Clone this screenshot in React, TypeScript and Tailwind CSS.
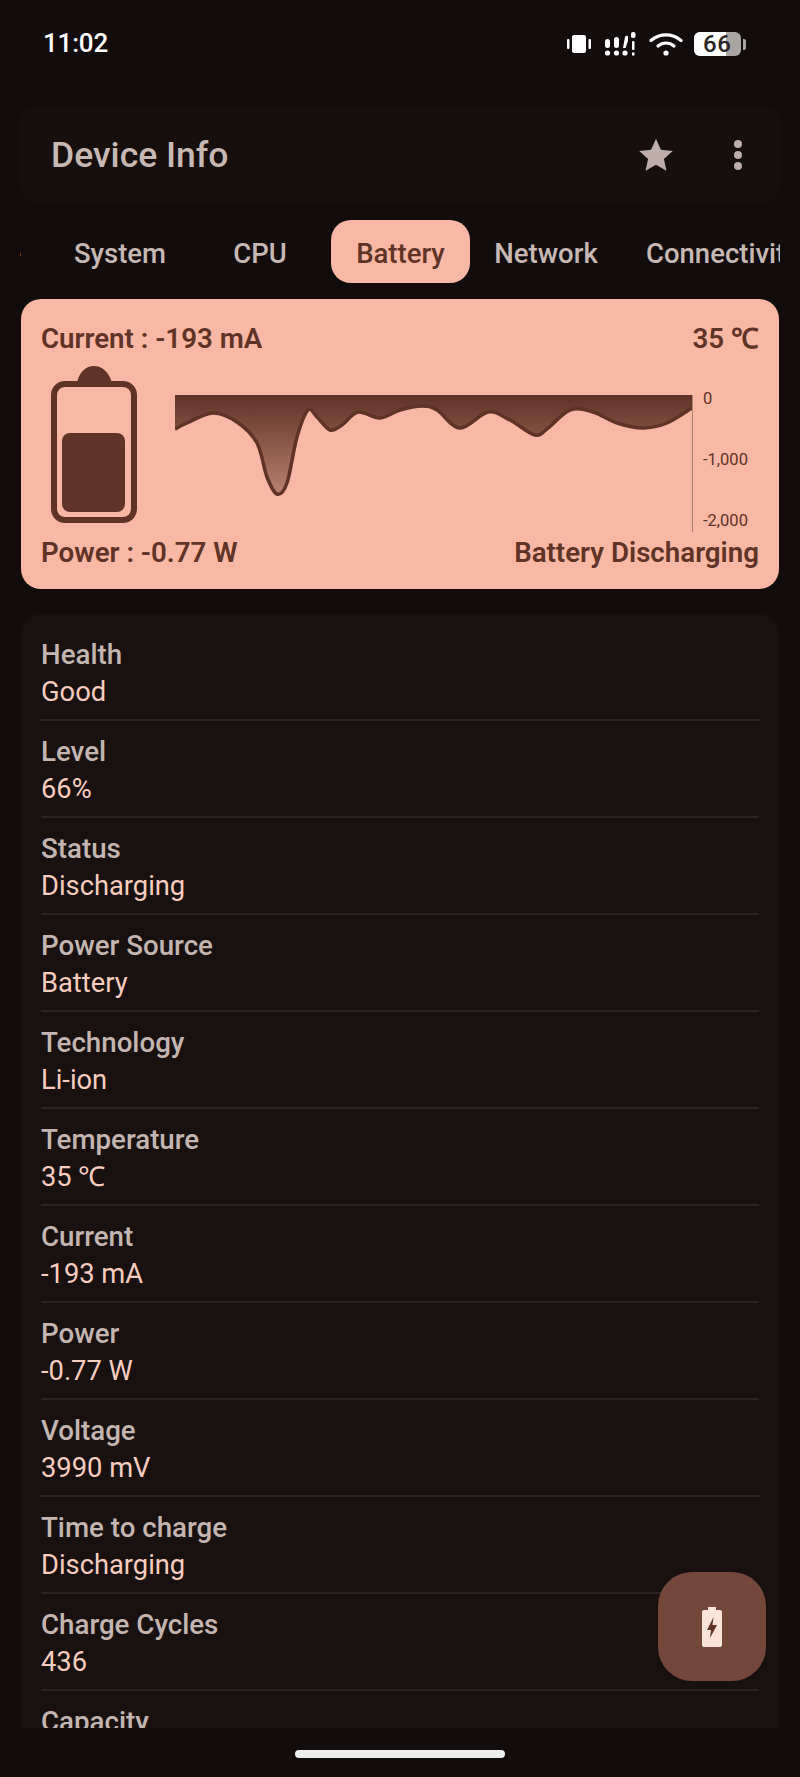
const TABS = [
  { label: 'System', width: 'w-[138px]' },
  { label: 'CPU', width: 'w-[142px]' },
  { label: 'Battery', width: 'w-[139px]', active: true },
  { label: 'Network', width: 'w-[152px]' },
  { label: 'Connectivity', width: 'w-[210px]' },
]

const ROWS = [
  ['Health', 'Good'],
  ['Level', '66%'],
  ['Status', 'Discharging'],
  ['Power Source', 'Battery'],
  ['Technology', 'Li-ion'],
  ['Temperature', '35 ℃'],
  ['Current', '-193 mA'],
  ['Power', '-0.77 W'],
  ['Voltage', '3990 mV'],
  ['Time to charge', 'Discharging'],
  ['Charge Cycles', '436'],
  ['Capacity', '4500 mAh'],
]

// samples read off the reference, relative to the top left of the chart
const CURVE: [number, number][] = [
  [0, 34], [12, 28], [38, 18], [62, 27], [82, 48], [92, 82], [102, 99], [112, 88], [122, 42],
  [133, 15], [142, 22], [155, 35], [167, 30], [183, 17], [205, 23], [225, 15], [247, 11],
  [262, 15], [285, 33], [313, 17], [335, 25], [360, 40], [373, 33], [395, 15], [418, 17],
  [442, 28], [468, 33], [492, 28], [517, 13],
]

function smoothPath(points: [number, number][]) {
  let d = `M${points[0][0]} ${points[0][1]}`
  for (let i = 0; i < points.length - 1; i++) {
    const p0 = points[Math.max(i - 1, 0)]
    const p1 = points[i]
    const p2 = points[i + 1]
    const p3 = points[Math.min(i + 2, points.length - 1)]
    const c1x = p1[0] + (p2[0] - p0[0]) / 6
    const c1y = p1[1] + (p2[1] - p0[1]) / 6
    const c2x = p2[0] - (p3[0] - p1[0]) / 6
    const c2y = p2[1] - (p3[1] - p1[1]) / 6
    d += ` C${c1x} ${c1y} ${c2x} ${c2y} ${p2[0]} ${p2[1]}`
  }
  return d
}

function StatusIcons() {
  return (
    <div className="mt-[4px] flex items-center">
      <svg width="24" height="20" viewBox="0 0 24 20" fill="#fff" className="mr-[12px]">
        <rect x="5" y="1" width="14" height="18" rx="2" />
        <rect x="0" y="5" width="2.5" height="10" rx="1" />
        <rect x="21.5" y="5" width="2.5" height="10" rx="1" />
      </svg>
      <svg width="34" height="26" viewBox="0 0 34 26" fill="#fff" className="mr-[12px]">
        <rect x="2" y="8" width="5" height="9" rx="2.5" />
        <circle cx="4.5" cy="22" r="2.6" />
        <rect x="11" y="6" width="5" height="11" rx="2.5" />
        <circle cx="13.5" cy="22" r="2.6" />
        <path d="M20 17 L22 6 Q23 4 25 5 L25 10 L22.500 17 Z" />
        <circle cx="22" cy="22" r="2.6" />
        <rect x="28" y="1" width="4.500" height="6" rx="2" />
        <rect x="29" y="10" width="2.500" height="9" rx="1" />
        <rect x="29" y="21.500" width="2.500" height="3" />
      </svg>
      <svg width="34" height="24" viewBox="0 0 34 24" fill="none" stroke="#fff" strokeWidth="3.2" strokeLinecap="round" className="mr-[11px]">
        <path d="M2 8.500 C11 1 23 1 32 8.500" />
        <path d="M9 14 C13.500 10 20.500 10 25 14" />
        <circle cx="17" cy="21" r="2.600" fill="#fff" stroke="none" />
      </svg>
      <div className="relative flex h-[24px] w-[47px] items-center overflow-hidden rounded-[6px] bg-[#a8a5a3]">
        <div className="h-full w-[32px] bg-white" />
        <span className="absolute left-[9px] top-[-2px] text-[24px] leading-[28px] font-medium tracking-[0.5px] text-[#2b2624]">66</span>
      </div>
      <div className="ml-[2px] h-[11px] w-[3px] rounded-r-[2px] bg-[#a8a5a3]" />
    </div>
  )
}

function BatteryGauge() {
  return (
    <svg width="86" height="157" viewBox="0 0 86 157" className="ml-[10px] shrink-0">
      <path d="M26 17 C28 6 35 0 43 0 C51 0 58 6 61 17 Z" fill="#5f3327" />
      <rect x="3" y="18" width="80" height="136" rx="11" fill="none" stroke="#5f3327" strokeWidth="6" />
      <rect x="11" y="67" width="63" height="79" rx="8" fill="#5f3327" />
    </svg>
  )
}

function UsageChart() {
  const line = smoothPath(CURVE)
  return (
    <div className="relative ml-[38px] h-[137px] w-[518px] border-r border-[#a98172]">
      <svg width="517" height="137" viewBox="0 0 517 137" className="block">
        <defs>
          <linearGradient id="drain" x1="0" y1="0" x2="0" y2="1">
            <stop offset="0" stopColor="#5f3327" />
            <stop offset="1" stopColor="#b9806f" />
          </linearGradient>
        </defs>
        <path d={`M0 0 L0 34 ${line.replace(/^M\S+ \S+/, '')} L517 0 Z`} fill="url(#drain)" />
        <path d={line} fill="none" stroke="#5f3327" strokeWidth="3.500" />
        <rect x="0" y="0" width="517" height="2" fill="#5f3327" />
      </svg>
    </div>
  )
}

export default function App() {
  return (
    <div className="relative flex h-[1777px] w-[800px] flex-col overflow-hidden bg-[#120d0c] font-['Roboto',sans-serif]">
      <div className="flex h-[107px] shrink-0 items-start justify-between pt-[27px] pr-[54px] pl-[43px]">
        <span className="text-[26px] leading-[32px] font-medium tracking-[-0.2px] text-white">11:02</span>
        <StatusIcons />
      </div>

      <div className="mx-[20px] flex h-[95px] shrink-0 items-center rounded-[16px] bg-[#170f0e] pr-[38px] pl-[31px]">
        <span className="flex-1 pt-[3px] text-[35.500px] font-medium text-[#c8b8b4]">Device Info</span>
        <svg width="38" height="38" viewBox="0 0 24 24" fill="#bdaeaa" className="mr-[59px]">
          <path d="M12 1.800 L15.100 8.700 L22.600 9.500 L17 14.600 L18.600 22 L12 18.200 L5.400 22 L7 14.600 L1.400 9.500 L8.900 8.700 Z" />
        </svg>
        <div className="flex flex-col gap-[3px]">
          <div className="h-[8px] w-[8px] rounded-full bg-[#bdaeaa]" />
          <div className="h-[8px] w-[8px] rounded-full bg-[#bdaeaa]" />
          <div className="h-[8px] w-[8px] rounded-full bg-[#bdaeaa]" />
        </div>
      </div>

      <div className="mx-[20px] mt-[18px] flex h-[63px] shrink-0 overflow-hidden">
        <div className="flex h-full w-[31px] shrink-0 items-center justify-end whitespace-nowrap pt-[4px] pr-[30px] text-[28px] font-medium text-[#c8b8b4]">Device</div>
        {TABS.map((tab) => (
          <div
            key={tab.label}
            className={`flex h-full shrink-0 items-center whitespace-nowrap rounded-[20px] pt-[4px] text-[27.500px] font-medium ${tab.width} ${tab.label === 'Connectivity' ? 'pl-[24px]' : 'justify-center'} ${tab.active ? 'bg-[#f9b7a5] text-[#5f3327]' : 'text-[#c8b8b4]'}`}
          >
            {tab.label}
          </div>
        ))}
      </div>

      <div className="mx-[21px] mt-[16px] flex h-[290px] shrink-0 flex-col rounded-[20px] bg-[#f9b7a5] px-[20px] text-[#5f3327]">
        <div className="mt-[24px] flex justify-between text-[27.700px] leading-[32px] font-semibold">
          <span>Current : -193 mA</span>
          <span>35 ℃</span>
        </div>
        <div className="mt-[11px] flex h-[157px] items-start">
          <BatteryGauge />
          <div className="mt-[29px]">
            <UsageChart />
          </div>
          <div className="mt-[22px] ml-[10px] flex flex-col gap-[39px] text-[16.500px] leading-[22px] text-[#5f3327]">
            <span>0</span>
            <span>-1,000</span>
            <span>-2,000</span>
          </div>
        </div>
        <div className="mt-[14px] flex justify-between text-[27.700px] leading-[32px] font-semibold">
          <span>Power : -0.77 W</span>
          <span>Battery Discharging</span>
        </div>
      </div>

      <div className="mx-[21px] mt-[25px] h-[1114px] shrink-0 overflow-hidden rounded-t-[20px] bg-[#191110] px-[20px] pt-[10px]">
        {ROWS.map(([label, value], i) => (
          <div key={label} className={`h-[97px] pt-[12px] ${i < ROWS.length - 1 ? 'border-b-2 border-[#2c2322]' : ''}`}>
            <div className="text-[27.700px] leading-[38px] font-medium text-[#c4b5b1]">{label}</div>
            <div className="text-[27.300px] leading-[36px] font-normal text-[#f8cdbf]">{value}</div>
          </div>
        ))}
      </div>

      <div className="absolute top-[1572px] left-[658px] flex h-[109px] w-[108px] items-center justify-center rounded-[34px] bg-[#73483a]">
        <svg width="20" height="40" viewBox="0 0 20 40">
          <path d="M6 0 H14 V3 H18 Q20 3 20 5 V38 Q20 40 18 40 H2 Q0 40 0 38 V5 Q0 3 2 3 H6 Z" fill="#fde3da" />
          <path d="M11.500 10 L5 23 H9 L8 31 L15 18 H10.500 Z" fill="#5f3327" />
        </svg>
      </div>

      <div className="absolute top-[1750px] left-[295px] h-[8px] w-[210px] rounded-full bg-[#ececec]" />
    </div>
  )
}
